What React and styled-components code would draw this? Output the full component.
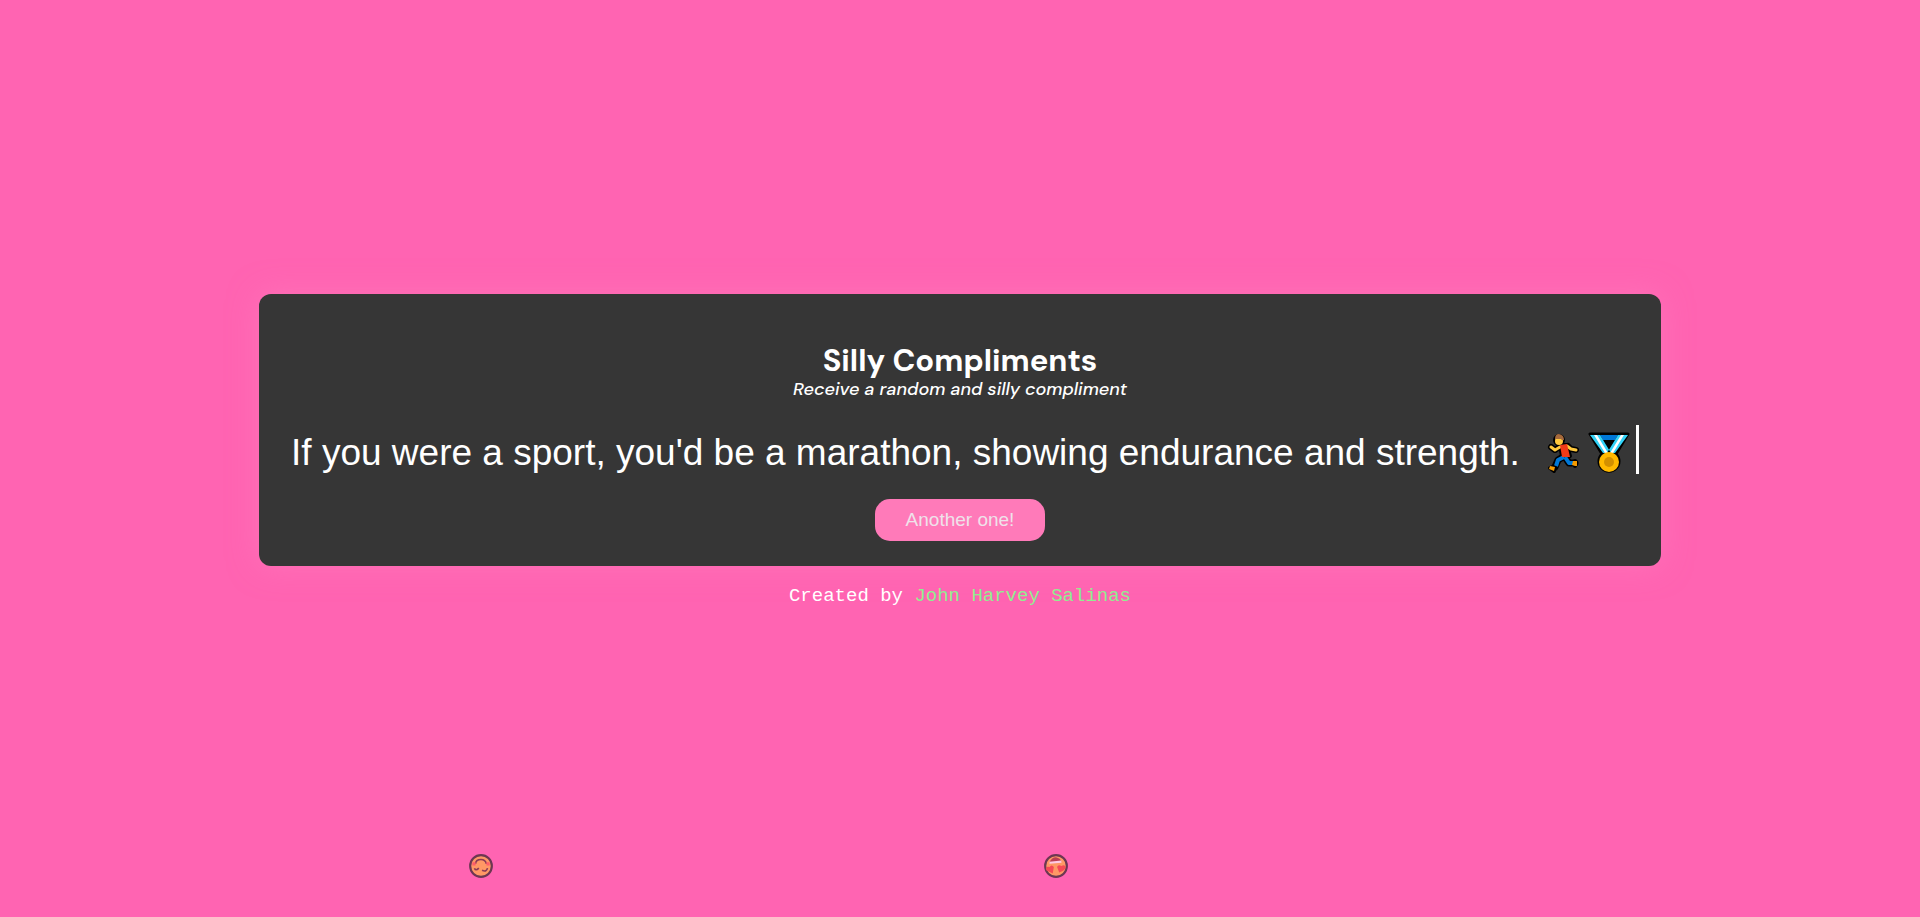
import React from "react";
import styled, { createGlobalStyle } from "styled-components";

const GlobalStyle = createGlobalStyle`
  * { box-sizing: border-box; }
  body {
    margin: 0;
    background: #ff64b2;
    color: #fff;
    font-family: "Liberation Sans", Arial, sans-serif;
  }
`;

const Page = styled.main`
  position: relative;
  min-height: 100vh;
  display: flex;
  flex-direction: column;
  align-items: center;
  justify-content: center;
  gap: 18px;
  overflow: hidden;
`;

const Card = styled.section`
  display: flex;
  flex-direction: column;
  align-items: center;
  max-width: 100%;
  padding: 49px 22px 25px;
  border-radius: 12px;
  background: #363636;
  box-shadow: 0 0 30px rgba(255, 128, 191, 0.5);
`;

const Title = styled.h1`
  margin: 0;
  font: 700 31px/36px "DM Sans", Inter, sans-serif;
`;

const Subtitle = styled.p`
  margin: 0;
  font: italic 500 18px/20px "DM Sans", Inter, sans-serif;
`;

const Compliment = styled.div`
  display: flex;
  align-items: flex-end;
  margin: 26px 0 25px;
  padding-left: 10px;
  font-size: 37px;
  line-height: 43px;
`;

const Emojis = styled.span`
  display: flex;
  flex-shrink: 0;
  gap: 8px;
  margin: 0 6px 0 26px;
`;

const Caret = styled.span`
  flex-shrink: 0;
  width: 3px;
  height: 49px;
  background: #fff;
`;

const Button = styled.button`
  padding: 0 31px;
  height: 42px;
  border: 0;
  border-radius: 15px;
  background: #ff7ab9;
  color: #efe2ea;
  font: 19px "Liberation Sans", Arial, sans-serif;
  cursor: pointer;
`;

const Credit = styled.footer`
  padding-bottom: 16px;
  font: 19px/24px "Liberation Mono", "Courier New", monospace;
`;

const AuthorLink = styled.a`
  color: #90ee90;
  text-decoration: none;
`;

const FallingFace = styled.svg`
  position: absolute;
  left: ${(p) => p.$left};
  top: 93%;
  width: 26px;
  height: 26px;
  opacity: 0.65;
`;

const Runner = () => (
  <svg width="34" height="42" viewBox="0 0 34 42" role="img" aria-label="Runner">
    <g stroke="#000" strokeLinejoin="round" strokeLinecap="round" fill="none">
      <circle cx="13" cy="8" r="4" fill="#000" strokeWidth="4" />
      <path d="m14 13 7 0 3 11h-8Z" fill="#000" strokeWidth="4" />
      <path d="M13 15 9 18 5 15M22 14l3 3 5 1" strokeWidth="6" />
      <path d="m17 25-5 3-3 7M19 25l4 6h6" strokeWidth="7" />
      <path d="m9 34-5 2 4 3M29 29v5" strokeWidth="4" />
    </g>
    <path d="M14 15 9 18 5 15M21 14l4 3 5 1" fill="none" stroke="#ffc83d" strokeWidth="3" strokeLinecap="round" strokeLinejoin="round" />
    <path d="m18 25-6 3-2 6M19 25l4 6h5" fill="none" stroke="#0078d7" strokeWidth="4" strokeLinejoin="round" />
    <path d="m14 13 7-1 3 13h-8Z" fill="#f03a17" />
    <path d="m4 34 5 1-1 4-5-2ZM27 29h4v5h-2l-3-1Z" fill="#f59b00" />
    <circle cx="13" cy="9" r="4" fill="#ffc83d" />
    <path d="M9 7q0-5 4-5 5 1 5 6-2 1-3-1Z" fill="#a4693d" />
  </svg>
);

const Medal = () => (
  <svg width="42" height="42" viewBox="0 0 42 42" role="img" aria-label="Medal">
    <path d="M2 2h38L28 22a10 10 0 1 1-14 0Z" fill="#000" stroke="#000" strokeWidth="3" strokeLinejoin="round" />
    <path d="M12 3h18l-3 5H15Z" fill="#0078d7" />
    <path d="M2 3h10l11 18h-8ZM40 3H30L19 21h8Z" fill="#31d2f7" />
    <path d="M6 3h3l11 18h-3ZM36 3h-3L22 21h3Z" fill="#fff" />
    <circle cx="21" cy="30" r="10" fill="#ffb900" />
    <circle cx="21" cy="30" r="5" fill="#d29000" />
  </svg>
);

const SmilingFace = () => (
  <FallingFace $left="24.4%" viewBox="0 0 24 24" role="img" aria-label="Upside-down smile">
    <circle cx="12" cy="12" r="10" fill="#ffb43d" stroke="#202020" strokeWidth="2" />
    <path d="M7 10q0-4 5-4 4 0 5 4" fill="none" stroke="#4e2525" strokeWidth="1.5" />
    <path d="M6 14q1 3 4 0M13 16q4 2 5-2" fill="none" stroke="#4e2525" strokeWidth="1.5" />
    <path d="M4 10h3M17 10h3" stroke="#ff5a43" strokeWidth="3" />
  </FallingFace>
);

const HeartEyesFace = () => (
  <FallingFace $left="54.3%" viewBox="0 0 24 24" role="img" aria-label="Heart eyes">
    <circle cx="12" cy="12" r="10" fill="#ffb43d" stroke="#202020" strokeWidth="2" />
    <path d="M6 9q2-5 6-5 4 1 5 4Z" fill="#982c24" />
    <path d="m6 9 11-1" stroke="#fff" strokeWidth="2" />
    <path d="m9 19-6-3q-1-4 3-3 2-3 4 0ZM15 18l-2-5q1-3 4-1 3-2 4 1 0 3-6 5Z" fill="#f23b26" />
  </FallingFace>
);

export default function App() {
  return (
    <>
      <GlobalStyle />
      <Page>
        <Card>
          <Title>Silly Compliments</Title>
          <Subtitle>Receive a random and silly compliment</Subtitle>
          <Compliment>
            <span>If you were a sport, you'd be a marathon, showing endurance and strength.</span>
            <Emojis>
              <Runner />
              <Medal />
            </Emojis>
            <Caret />
          </Compliment>
          <Button type="button">Another one!</Button>
        </Card>
        <Credit>
          Created by <AuthorLink href="#author">John Harvey Salinas</AuthorLink>
        </Credit>
        <SmilingFace />
        <HeartEyesFace />
      </Page>
    </>
  );
}
